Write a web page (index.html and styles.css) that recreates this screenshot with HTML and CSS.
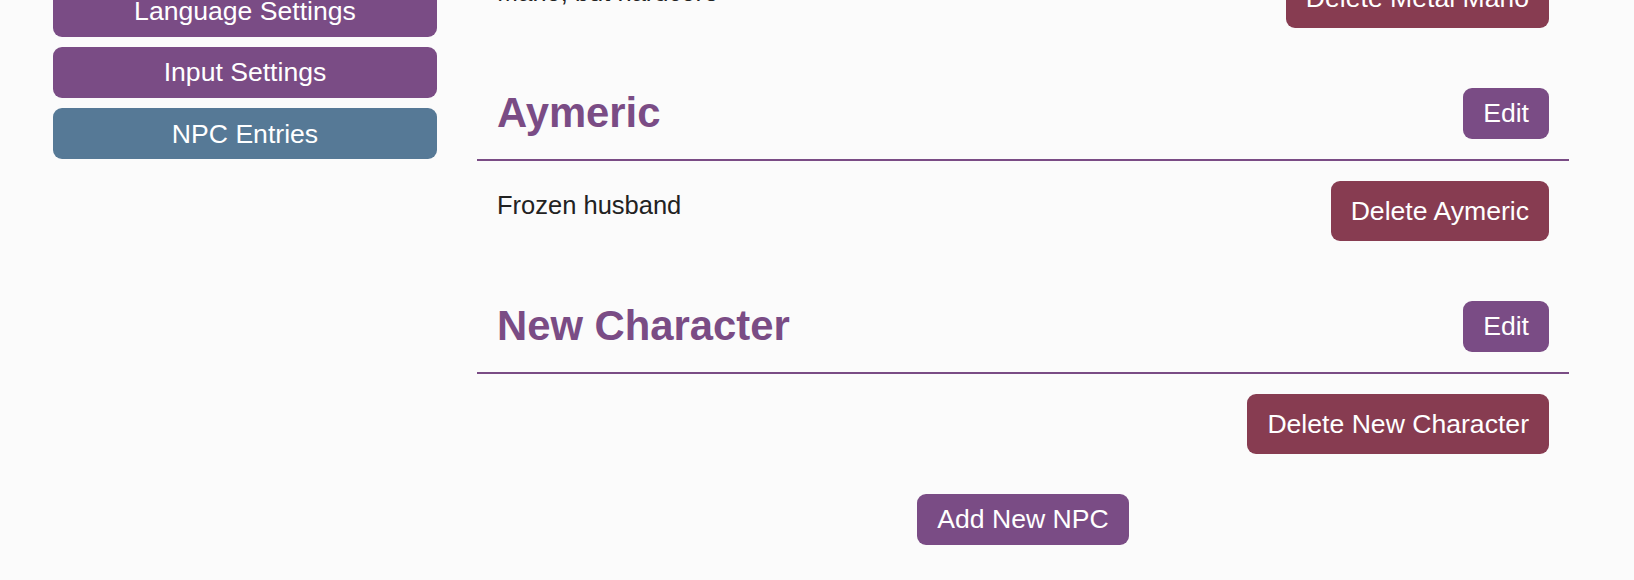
FILE: index.html
```html
<!DOCTYPE html>
<html lang="en">
<head>
<meta charset="utf-8">
<title>NPC Entries</title>
<link rel="stylesheet" href="styles.css">
</head>
<body>
<div class="layout">
  <nav class="sidebar">
    <button class="nav-btn">Language Settings</button>
    <button class="nav-btn">Input Settings</button>
    <button class="nav-btn active">NPC Entries</button>
  </nav>
  <main class="content">
    <section class="entry">
      <div class="entry-head">
        <h2 class="entry-name">Metal Mario</h2>
        <button class="btn btn-edit">Edit</button>
      </div>
      <div class="entry-body">
        <p class="entry-desc">Mario, but hardcore</p>
        <button class="btn btn-delete">Delete Metal Mario</button>
      </div>
    </section>
    <section class="entry">
      <div class="entry-head">
        <h2 class="entry-name">Aymeric</h2>
        <button class="btn btn-edit">Edit</button>
      </div>
      <div class="entry-body">
        <p class="entry-desc">Frozen husband</p>
        <button class="btn btn-delete">Delete Aymeric</button>
      </div>
    </section>
    <section class="entry">
      <div class="entry-head">
        <h2 class="entry-name">New Character</h2>
        <button class="btn btn-edit">Edit</button>
      </div>
      <div class="entry-body">
        <p class="entry-desc"></p>
        <button class="btn btn-delete">Delete New Character</button>
      </div>
    </section>
    <div class="add-row">
      <button class="btn btn-edit">Add New NPC</button>
    </div>
  </main>
</div>
</body>
</html>
```
FILE: styles.css
```css
html, body {
  margin: 0;
  padding: 0;
  background: #fbfbfb;
  font-family: "Liberation Sans", Arial, Helvetica, sans-serif;
  overflow: hidden;
}

.layout {
  display: flex;
  align-items: flex-start;
  gap: 40px;
  padding: 0 65px 0 53px;
  margin-top: -145.5px;
}

.sidebar {
  width: 384px;
  flex: 0 0 384px;
  display: flex;
  flex-direction: column;
  gap: 10.3px;
  margin-top: 131.2px;
}

.nav-btn {
  display: block;
  width: 100%;
  border: none;
  border-radius: 9px;
  background: #7a4c85;
  color: #ffffff;
  font-family: inherit;
  font-size: 26.6px;
  line-height: 30px;
  padding: 10.5px 20px;
  text-align: center;
  cursor: pointer;
}

.nav-btn.active {
  background: #567996;
}

.content {
  flex: 1;
  min-width: 0;
}

.entry {
  margin-bottom: 20px;
}

.entry-head {
  display: flex;
  align-items: center;
  justify-content: space-between;
  padding: 20px;
  border-bottom: 2px solid #7a4c85;
}

.entry-name {
  margin: 0;
  font-size: 41.8px;
  font-weight: bold;
  color: #7a4c85;
}

.entry-body {
  display: flex;
  align-items: flex-start;
  justify-content: space-between;
  padding: 20px;
}

.entry-desc {
  margin: 0;
  padding-top: 10.3px;
  font-size: 25.5px;
  color: #222222;
}

.btn {
  border: none;
  border-radius: 9px;
  color: #ffffff;
  font-family: inherit;
  font-size: 26.6px;
  line-height: 30px;
  padding: 10.5px 20px;
  cursor: pointer;
  white-space: nowrap;
}

.btn-edit {
  background: #7a4c85;
}

.btn-delete {
  background: #873c51;
  padding: 15px 20px;
}

.add-row {
  display: flex;
  justify-content: center;
}
```
